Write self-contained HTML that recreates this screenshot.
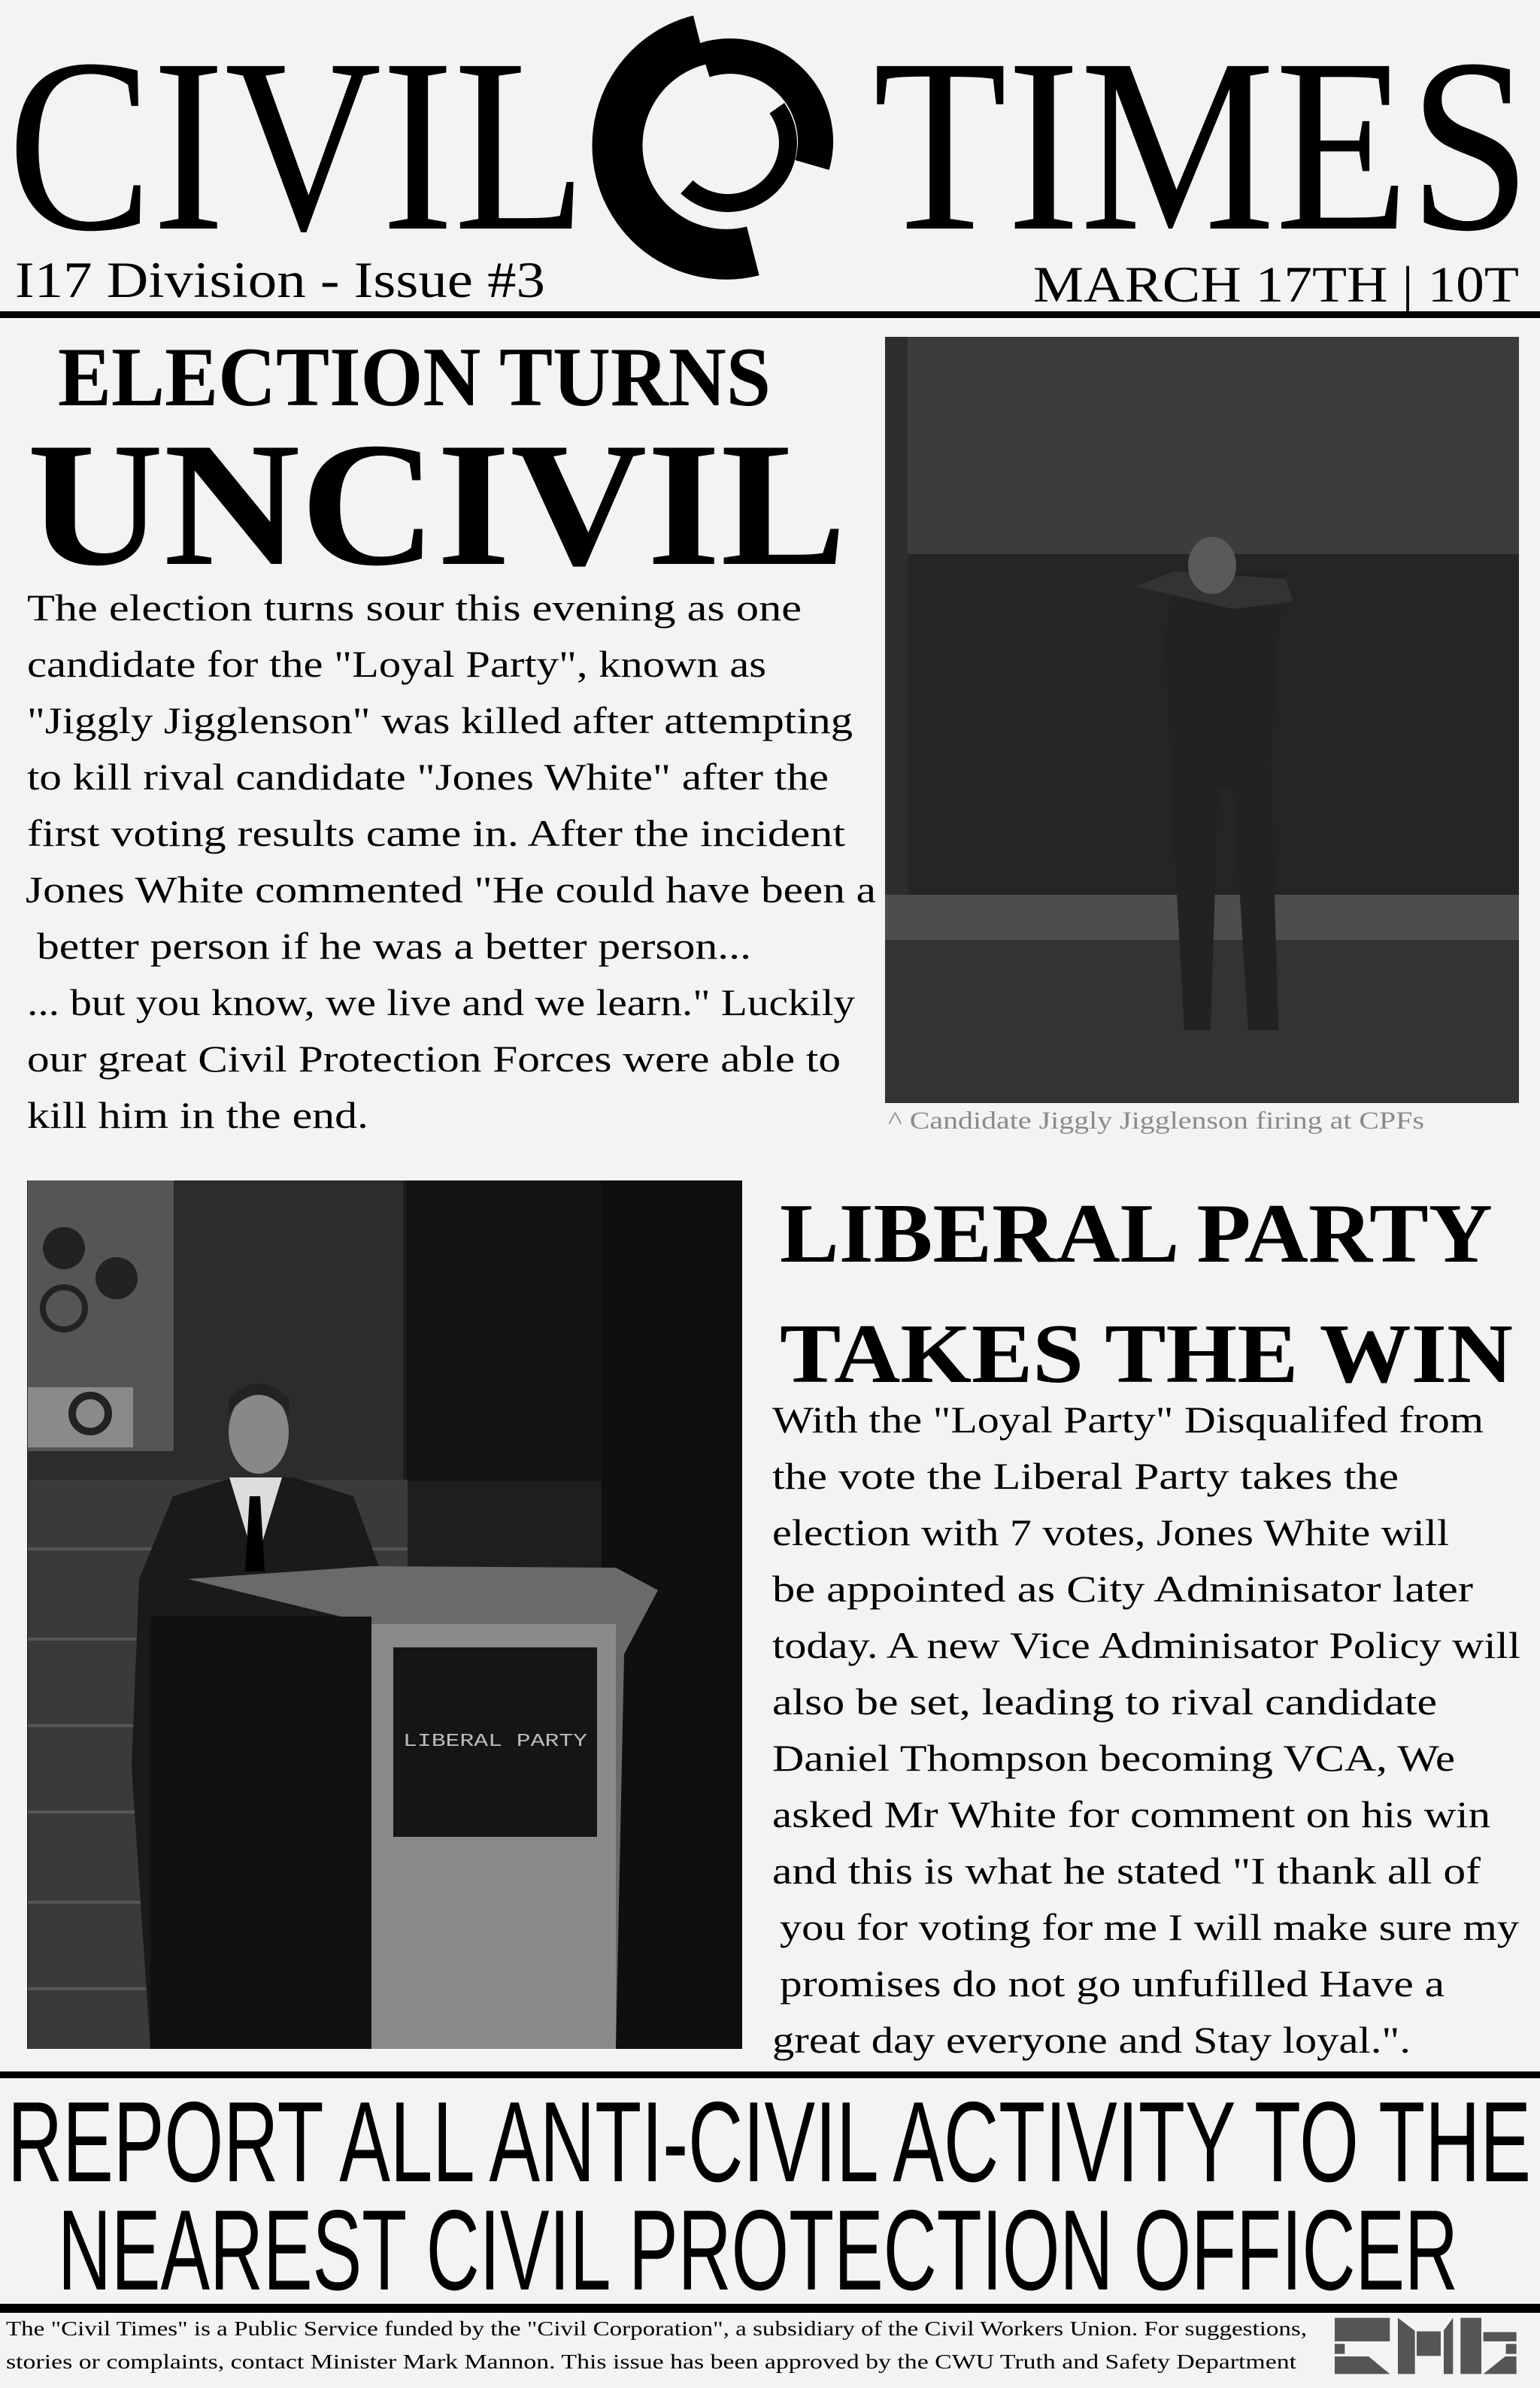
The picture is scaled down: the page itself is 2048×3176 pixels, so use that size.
<!DOCTYPE html>
<html><head><meta charset="utf-8"><style>
html,body{margin:0;padding:0;background:#f3f3f3;}
svg{display:block}
.s{font-family:"Liberation Serif",serif;}
.b{font-family:"Liberation Serif",serif;font-weight:bold;}
.n{font-family:"Liberation Sans Narrow","Liberation Sans",sans-serif;}
</style></head><body>
<svg width="2048" height="3176" viewBox="0 0 2048 3176" xmlns="http://www.w3.org/2000/svg">
<rect width="2048" height="3176" fill="#f3f3f3"/>
<!-- Masthead -->
<text class="s" x="10" y="304" font-size="330" textLength="770" lengthAdjust="spacingAndGlyphs">CIVIL</text>
<text class="s" x="1161" y="304" font-size="330" textLength="875" lengthAdjust="spacingAndGlyphs">TIMES</text>
<g fill="none" stroke="#000">
<path d="M1001.4,333.8 A144.5,144.5 0 0 1 930.2,53.1" stroke-width="67"/>
<path d="M936.5,80.1 A113.5,113.5 0 0 1 1080.1,219.5" stroke-width="47"/>
<path d="M1033.2,143.8 A80,80 0 0 1 913.4,248.6" stroke-width="24"/>
</g>
<text class="s" x="20" y="395" font-size="68" textLength="705" lengthAdjust="spacingAndGlyphs">I17 Division - Issue #3</text>
<text class="s" x="1374" y="401" font-size="68" textLength="646" lengthAdjust="spacingAndGlyphs">MARCH 17TH  |  10T</text>
<rect x="0" y="414" width="2048" height="9" fill="#000"/>
<!-- Headline 1 -->
<text class="b" x="77" y="539" font-size="112" textLength="948" lengthAdjust="spacingAndGlyphs">ELECTION TURNS</text>
<text class="b" x="36" y="750" font-size="236" textLength="1090" lengthAdjust="spacingAndGlyphs">UNCIVIL</text>
<g class="s" font-size="50">
<text x="36" y="825" textLength="1030" lengthAdjust="spacingAndGlyphs">The election turns sour this evening as one</text>
<text x="36" y="900" textLength="983" lengthAdjust="spacingAndGlyphs">candidate for the "Loyal Party", known as</text>
<text x="36" y="975" textLength="1098" lengthAdjust="spacingAndGlyphs">"Jiggly Jigglenson" was killed after attempting</text>
<text x="36" y="1050" textLength="1066" lengthAdjust="spacingAndGlyphs">to kill rival candidate "Jones White" after the</text>
<text x="36" y="1125" textLength="1088" lengthAdjust="spacingAndGlyphs">first voting results came in. After the incident</text>
<text x="34" y="1200" textLength="1131" lengthAdjust="spacingAndGlyphs">Jones White commented "He could have been a</text>
<text x="49" y="1275" textLength="950" lengthAdjust="spacingAndGlyphs">better person if he was a better person...</text>
<text x="36" y="1350" textLength="1101" lengthAdjust="spacingAndGlyphs">... but you know, we live and we learn." Luckily</text>
<text x="36" y="1425" textLength="1082" lengthAdjust="spacingAndGlyphs">our great Civil Protection Forces were able to</text>
<text x="36" y="1500" textLength="454" lengthAdjust="spacingAndGlyphs">kill him in the end.</text>
</g>
<!-- Right photo -->
<rect x="1177" y="448" width="843" height="1019" fill="#3c3c3c"/>
<rect x="1177" y="448" width="30" height="1019" fill="#2e2e2e"/>
<rect x="1207" y="737" width="813" height="460" fill="#252525"/>
<rect x="1177" y="1190" width="843" height="60" fill="#4d4d4d"/>
<rect x="1177" y="1250" width="843" height="217" fill="#333"/>
<path d="M1560,1100 L1575,1370 L1610,1370 L1620,1050 L1640,1050 L1660,1370 L1700,1370 L1690,1010 L1700,850 L1710,760 L1560,760 L1550,850 Z" fill="#222"/>
<path d="M1510,780 L1560,760 L1710,770 L1720,800 L1640,810 Z" fill="#333"/>
<ellipse cx="1612" cy="752" rx="32" ry="38" fill="#5a5a5a"/>
<text class="s" x="1181" y="1501" font-size="33" fill="#8a8a8a" textLength="713" lengthAdjust="spacingAndGlyphs">^ Candidate Jiggly Jigglenson firing at CPFs</text>
<!-- Left photo -->
<rect x="36" y="1570" width="951" height="1155" fill="#1e1e1e"/>
<rect x="36" y="1570" width="500" height="400" fill="#2c2c2c"/>
<rect x="37" y="1570" width="194" height="360" fill="#555"/>
<rect x="37" y="1845" width="140" height="80" fill="#8a8a8a"/>
<circle cx="85" cy="1660" r="28" fill="#222"/><circle cx="155" cy="1700" r="28" fill="#222"/><circle cx="85" cy="1740" r="28" fill="none" stroke="#222" stroke-width="8"/><circle cx="120" cy="1880" r="24" fill="none" stroke="#222" stroke-width="10"/>
<rect x="540" y="1570" width="260" height="400" fill="#141414"/>
<rect x="800" y="1570" width="187" height="1155" fill="#0f0f0f"/>
<rect x="37" y="1968" width="505" height="757" fill="#3a3a3a"/>
<g stroke="#555" stroke-width="4"><line x1="37" y1="2060" x2="542" y2="2060"/><line x1="37" y1="2180" x2="542" y2="2180"/><line x1="37" y1="2295" x2="542" y2="2295"/><line x1="37" y1="2410" x2="542" y2="2410"/><line x1="37" y1="2530" x2="542" y2="2530"/><line x1="37" y1="2645" x2="542" y2="2645"/></g>
<path d="M230,1990 L310,1965 L390,1965 L470,1990 L510,2100 L530,2725 L200,2725 L175,2350 L185,2100 Z" fill="#1a1a1a"/>
<path d="M305,1965 L340,2080 L375,1965 Z" fill="#ddd"/>
<path d="M332,1990 L346,1990 L352,2090 L326,2090 Z" fill="#000"/>
<ellipse cx="344" cy="1905" rx="40" ry="55" fill="#888"/>
<path d="M304,1880 Q344,1830 384,1880 L384,1860 Q344,1820 304,1860 Z" fill="#222"/>
<path d="M250,2100 L494,2083 L819,2085 L875,2115 L830,2200 L819,2725 L494,2725 L494,2160 Z" fill="#6a6a6a"/>
<rect x="494" y="2160" width="325" height="565" fill="#8a8a8a"/>
<rect x="523" y="2191" width="271" height="252" fill="#151515"/>
<text x="536" y="2322" font-family="Liberation Mono,monospace" font-size="24" fill="#bbb" textLength="245" lengthAdjust="spacingAndGlyphs">LIBERAL PARTY</text>
<rect x="200" y="2150" width="294" height="575" fill="#111"/>
<!-- Headline 2 -->
<text class="b" x="1037" y="1678" font-size="112" textLength="948" lengthAdjust="spacingAndGlyphs">LIBERAL PARTY</text>
<text class="b" x="1037" y="1838" font-size="112" textLength="975" lengthAdjust="spacingAndGlyphs">TAKES THE WIN</text>
<g class="s" font-size="50">
<text x="1027" y="1905" textLength="946" lengthAdjust="spacingAndGlyphs">With the "Loyal Party" Disqualifed from</text>
<text x="1027" y="1980" textLength="833" lengthAdjust="spacingAndGlyphs">the vote the Liberal Party takes the</text>
<text x="1027" y="2055" textLength="900" lengthAdjust="spacingAndGlyphs">election with 7 votes, Jones White will</text>
<text x="1027" y="2130" textLength="932" lengthAdjust="spacingAndGlyphs">be appointed as City Adminisator later</text>
<text x="1027" y="2205" textLength="995" lengthAdjust="spacingAndGlyphs">today. A new Vice Adminisator Policy will</text>
<text x="1027" y="2280" textLength="884" lengthAdjust="spacingAndGlyphs">also be set, leading to rival candidate</text>
<text x="1027" y="2355" textLength="908" lengthAdjust="spacingAndGlyphs">Daniel Thompson becoming VCA,  We</text>
<text x="1027" y="2430" textLength="955" lengthAdjust="spacingAndGlyphs">asked Mr White for comment on his win</text>
<text x="1027" y="2505" textLength="942" lengthAdjust="spacingAndGlyphs">and this is what he stated "I thank all of</text>
<text x="1037" y="2580" textLength="983" lengthAdjust="spacingAndGlyphs">you for voting for me I will make sure my</text>
<text x="1037" y="2655" textLength="884" lengthAdjust="spacingAndGlyphs">promises do not go unfufilled Have a</text>
<text x="1027" y="2730" textLength="849" lengthAdjust="spacingAndGlyphs">great day everyone and Stay loyal.".</text>
</g>
<rect x="0" y="2755" width="2048" height="9" fill="#000"/>
<text class="n" x="10" y="2901" font-size="152" textLength="2026" lengthAdjust="spacingAndGlyphs">REPORT ALL ANTI-CIVIL ACTIVITY TO THE</text>
<text class="n" x="77" y="3045" font-size="152" textLength="1862" lengthAdjust="spacingAndGlyphs">NEAREST CIVIL PROTECTION OFFICER</text>
<rect x="0" y="3064" width="2048" height="12" fill="#000"/>
<text class="s" x="8" y="3106" font-size="27" textLength="1730" lengthAdjust="spacingAndGlyphs">The "Civil Times" is a Public Service funded by the "Civil Corporation", a subsidiary of the Civil Workers Union. For suggestions,</text>
<text class="s" x="8" y="3150" font-size="27" textLength="1716" lengthAdjust="spacingAndGlyphs">stories or complaints, contact Minister Mark Mannon. This issue has been approved by the CWU Truth and Safety Department</text>
<g fill="#555" transform="translate(1740,3060) scale(0.3333)">
<rect x="105" y="68" width="220" height="94"/>
<rect x="105" y="172" width="40" height="40"/>
<polygon points="105,222 240,222 325,292 105,292"/>
<polygon points="357,68 425,120 425,292 357,292"/>
<rect x="432" y="122" width="96" height="98"/>
<polygon points="540,118 577,68 577,292 540,292"/>
<rect x="607" y="68" width="83" height="224"/>
<rect x="698" y="125" width="132" height="37"/>
<rect x="788" y="172" width="42" height="40"/>
<polygon points="785,222 830,222 830,292 698,292"/>
</g>
</svg>
</body></html>
